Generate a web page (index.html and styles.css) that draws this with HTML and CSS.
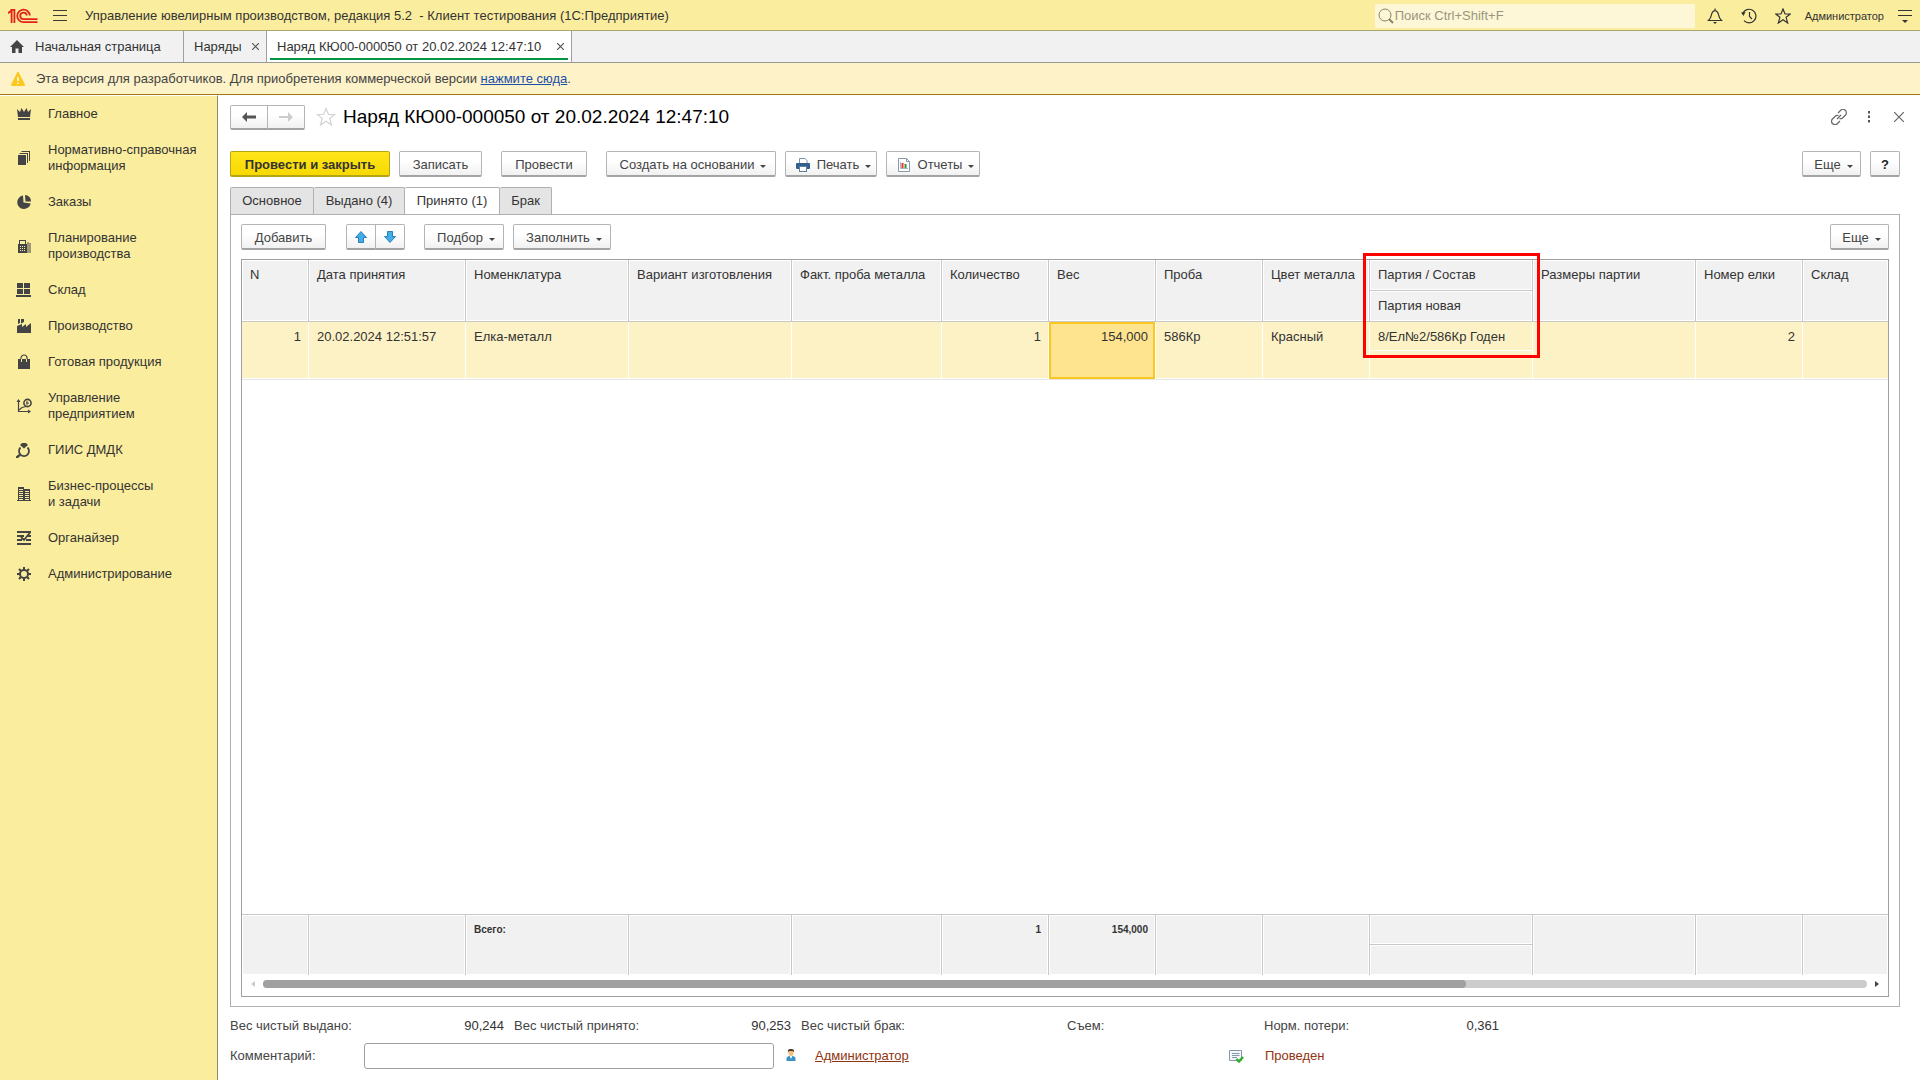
FILE: index.html
```html
<!DOCTYPE html>
<html lang="ru">
<head>
<meta charset="utf-8">
<title>Наряд КЮ00-000050 от 20.02.2024 12:47:10</title>
<link rel="stylesheet" href="styles.css">
</head>
<body>
<header class="topbar">
  <svg class="logo" width="30" height="16" viewBox="0 0 30 16" fill="none" stroke="#e2231a" stroke-width="1.800">
    <path d="M0 5.200 3.500 2.500M3.600 1.500V15M6.400 1V15M2.500 1.900H7.300"/>
    <path d="M21.800 7.500A6.300 6.300 0 1 0 15.500 14.200H29.500"/>
    <path d="M18.800 7.500A3.300 3.300 0 1 0 15.500 11.200H29.500"/>
  </svg>
  <button class="icon-btn burger" aria-label="Главное меню">
    <svg width="14" height="12" viewBox="0 0 14 12" stroke="#3a3a3a"><path d="M0 .5H14M0 5.500H14M0 10.500H14"/></svg>
  </button>
  <div class="app-title">Управление ювелирным производством, редакция 5.2 &nbsp;- Клиент тестирования (1С:Предприятие)</div>
  <label class="search">
    <svg width="16" height="16" viewBox="0 0 16 16" fill="none" stroke="#8a8468"><circle cx="7" cy="7" r="6"/><path d="M11 11 15 15" stroke-width="2"/></svg>
    <input type="text" placeholder="Поиск Ctrl+Shift+F" aria-label="Поиск">
  </label>
  <nav class="top-tools">
    <button class="icon-btn" aria-label="Оповещения"><svg width="16" height="16" viewBox="0 0 16 16" fill="none" stroke="#333" stroke-width="1.200"><path d="M1.500 12.500H14.500C12 10 12 9 11.500 6.500 11 4 10 3 8 2.500 6 3 5 4 4.500 6.500 4 9 4 10 1.500 12.500ZM8 .5V2.500"/><path d="M6 14H10L8 16Z" fill="#333" stroke="none"/></svg></button>
    <button class="icon-btn" aria-label="История"><svg width="16" height="16" viewBox="0 0 16 16" fill="none" stroke="#333" stroke-width="1.200"><path d="M1.800 5.500A6.800 6.800 0 1 1 3 12.600M8.500 4V8.500L11 11"/><path d="M0 4.500 4.500 4 2.500 8Z" fill="#333" stroke="none"/></svg></button>
    <button class="icon-btn" aria-label="Избранное"><svg width="16" height="16" viewBox="0 0 16 16" fill="none" stroke="#333" stroke-width="1.200"><path d="M8 1 10 6H15.300L11.100 9.300 12.700 15 8 11.700 3.300 15 4.900 9.300.700 6H6Z"/></svg></button>
    <a class="user" href="#">Администратор</a>
    <button class="icon-btn" aria-label="Сервис"><svg width="14" height="14" viewBox="0 0 14 14" stroke="#333"><path d="M0 1.500H14M0 6.500H14"/><path d="M4 11H10L7 14Z" fill="#333" stroke="none"/></svg></button>
  </nav>
</header>

<nav class="window-tabs">
  <a class="wtab home" href="#"><svg width="14" height="13" viewBox="0 0 14 13" fill="#444"><path d="M7 0 14 7H12V13H8.500V8.500H5.500V13H2V7H0Z"/></svg>Начальная страница</a>
  <a class="wtab list" href="#">Наряды<svg width="7" height="7" viewBox="0 0 7 7" stroke="#555" stroke-width="1.200"><path d="M0 0 7 7M7 0 0 7"/></svg></a>
  <a class="wtab current" href="#">Наряд КЮ00-000050 от 20.02.2024 12:47:10<svg width="7" height="7" viewBox="0 0 7 7" stroke="#555" stroke-width="1.200"><path d="M0 0 7 7M7 0 0 7"/></svg></a>
</nav>

<div class="banner">
  <svg width="14" height="14" viewBox="0 0 14 14"><path d="M7 1 13 13H1Z" fill="#fcc720" stroke="#fcc720" stroke-width="2" stroke-linejoin="round"/><path d="M7 5V9M7 10.500V12" stroke="#fff" stroke-width="1.400"/></svg>
  <p>Эта версия для разработчиков. Для приобретения коммерческой версии <a href="#">нажмите сюда</a>.</p>
</div>

<div class="workspace">
  <nav class="sections">
    <a href="#"><svg viewBox="0 0 16 16"><path d="M1 3 4 6 5.500 2 8 6 10.500 2 12 6 15 3 14 11H2ZM2 12H14V14H2Z"/></svg><span>Главное</span></a>
    <a href="#"><svg viewBox="0 0 16 16"><path d="M2 5H10V15H2ZM3.500 3H12V13H11V4H3.500ZM5.500 1H14V11H13V2H5.500Z"/></svg><span>Нормативно-справочная<br>информация</span></a>
    <a href="#"><svg viewBox="0 0 16 16"><path d="M7 1.500A6.800 6.800 0 1 0 14.700 9.500L7.500 8.500ZM9 1A6 6 0 0 1 15 7.500H9.500Z"/></svg><span>Заказы</span></a>
    <a href="#"><svg viewBox="0 0 16 16"><path fill-rule="evenodd" d="M2 6H3V2H10V6H11V15H2ZM4 3V6H9V3ZM4 8V9H5V8ZM6 8V9H7V8ZM8 8V9H9V8ZM4 10V11H5V10ZM6 10V11H7V10ZM8 10V11H9V10ZM4 12V13H5V12ZM6 12V13H7V12ZM8 12V13H9V12ZM11.500 4H12.500V15H11.500ZM13.500 5H14.500V15H13.500Z"/></svg><span>Планирование<br>производства</span></a>
    <a href="#"><svg viewBox="0 0 16 16"><path d="M1 1H7V6H1ZM8 1H14V6H8ZM1 7H7V12H1ZM8 7H14V12H8ZM0 13H15V15H0Z"/></svg><span>Склад</span></a>
    <a href="#"><svg viewBox="0 0 16 16"><path d="M1 8 6 6V9L10 6V9L15 5V15H1ZM2 1H4V5L2 6ZM5 1H8V4L5 5.500Z"/></svg><span>Производство</span></a>
    <a href="#"><svg viewBox="0 0 16 16"><path d="M2 5H14V15H2Z"/><path d="M5.500 5V8M10.500 5V8" stroke="#fbed9e"/><path d="M5 5V4A3 3 0 0 1 11 4V5" fill="none" stroke="#444" stroke-width="1.200"/></svg><span>Готовая продукция</span></a>
    <a href="#"><svg viewBox="0 0 16 16"><path d="M2.500 2V13.500H14M3 12 6 9.500 10 8.500" fill="none" stroke="#444" stroke-width="1.200"/><path d="M.5 4 2.500 1 4.500 4ZM12 11.500 15 13.500 12 15.500Z"/><circle cx="11.500" cy="5" r="3.600" fill="none" stroke="#444" stroke-width="1.600"/><path d="M11 3V7M10 5H13" stroke="#444"/></svg><span>Управление<br>предприятием</span></a>
    <a href="#"><svg viewBox="0 0 16 16"><path d="M4.500 5.500A5 5 0 1 0 11.500 5.500" fill="none" stroke="#444" stroke-width="1.800"/><path d="M6 1H10L12 3 8 6.500 4 3ZM3 12 5 13.500 2 16H0V14.500Z"/></svg><span>ГИИС ДМДК</span></a>
    <a href="#"><svg viewBox="0 0 16 16"><path fill-rule="evenodd" d="M2 1H8V3H14V14H15V15H1V14H2ZM3 3V4H7V3ZM3 5V6H7V5ZM3 7V8H7V7ZM3 9V10H7V9ZM3 11V12H7V11ZM3 13V14H7V13ZM9 5V6H13V5ZM9 7V8H13V7ZM9 9V10H13V9ZM9 11V12H13V11ZM9 13V14H13V13Z"/></svg><span>Бизнес-процессы<br>и задачи</span></a>
    <a href="#"><svg viewBox="0 0 16 16"><path d="M1 2H15M1 6H8M11 6H15M1 10H6M10 10H15M1 14H15M5 7 8 10 14 2.500" fill="none" stroke="#444" stroke-width="1.800"/></svg><span>Органайзер</span></a>
    <a href="#"><svg viewBox="0 0 16 16"><circle cx="8" cy="8" r="4" fill="none" stroke="#444" stroke-width="2"/><path d="M8 1V4M8 12V15M1 8H4M12 8H15M3 3 5 5M11 11 13 13M13 3 11 5M5 11 3 13" stroke="#444" stroke-width="2"/></svg><span>Администрирование</span></a>
  </nav>

  <main class="form">
    <div class="form-head">
      <div class="pair nav-pair">
        <button class="btn" aria-label="Назад"><svg width="14" height="10" viewBox="0 0 14 10"><path d="M0 5 5 0V3.500H14V6.500H5V10Z" fill="#555"/></svg></button>
        <button class="btn" aria-label="Вперед"><svg width="14" height="10" viewBox="0 0 14 10"><path d="M14 5 9 0V4H0V6H9V10Z" fill="#ccc"/></svg></button>
      </div>
      <svg class="fav" width="20" height="20" viewBox="0 0 20 20" fill="none" stroke="#d4d4d4" stroke-width="1.200"><path d="M10 1.500 12.500 7.500H18.500L13.700 11.500 15.500 18 10 14.200 4.500 18 6.300 11.500 1.500 7.500H7.500Z"/></svg>
      <h1>Наряд КЮ00-000050 от 20.02.2024 12:47:10</h1>
      <div class="form-tools">
        <button class="icon-btn" aria-label="Ссылка"><svg width="16" height="16" viewBox="0 0 16 16" fill="none" stroke="#666" stroke-width="1.200"><path d="M7 4 9.500 1.500A3 3 0 0 1 14.500 6L11.500 9A3 3 0 0 1 8.500 9.500M9 12 6.500 14.500A3 3 0 0 1 1.500 10L4.500 7A3 3 0 0 1 7.500 6.500M6 10 10 6"/></svg></button>
        <button class="icon-btn" aria-label="Меню"><svg width="4" height="12" viewBox="0 0 4 12" fill="#555"><path d="M1 0H3V2.500H1ZM1 4.500H3V7H1ZM1 9H3V11.500H1Z"/></svg></button>
        <button class="icon-btn" aria-label="Закрыть"><svg width="10" height="10" viewBox="0 0 10 10" stroke="#666" stroke-width="1.200"><path d="M0 0 10 10M10 0 0 10"/></svg></button>
      </div>
    </div>

    <div class="commands">
      <button class="btn primary">Провести и закрыть</button>
      <button class="btn w-save">Записать</button>
      <button class="btn gap w-post">Провести</button>
      <button class="btn gap drop w-create">Создать на основании</button>
      <button class="btn drop w-print"><svg width="16" height="16" viewBox="0 0 16 16"><path d="M4.500 6V1.500H10L12 3.500V6" fill="#fff" stroke="#7d93ab"/><rect x="1" y="6" width="14" height="6" rx="1" fill="#345f8c"/><rect x="4.500" y="9.500" width="7" height="5" fill="#fff" stroke="#5f7c9b"/></svg>Печать</button>
      <button class="btn drop w-report"><svg width="16" height="16" viewBox="0 0 16 16"><path d="M2.500 1.500H10.500L13.500 4.500V14.500H2.500Z" fill="#fff" stroke="#8a99ab"/><path d="M10.500 1.500V4.500H13.500" fill="none" stroke="#8a99ab"/><path d="M5.500 6H7.500V11H5.500Z" fill="#e33"/><path d="M8.500 7H10.500V11H8.500Z" fill="#393"/><path d="M4.500 5V11.500H12" fill="none" stroke="#a9b4c1"/></svg>Отчеты</button>
      <button class="btn drop push">Еще</button>
      <button class="btn help">?</button>
    </div>

    <nav class="pages">
      <button class="w-p1">Основное</button><button class="w-p2">Выдано (4)</button><button class="w-p3 current">Принято (1)</button><button class="w-p4">Брак</button>
    </nav>

    <section class="page">
      <div class="commands table-commands">
        <button class="btn w-add">Добавить</button>
        <div class="pair">
          <button class="btn" aria-label="Вверх"><svg width="12" height="12" viewBox="0 0 12 12"><path d="M6 .5 11.500 6.500H8.500V11.500H3.500V6.500H.5Z" fill="#41aeea" stroke="#2b7fb5"/></svg></button>
          <button class="btn" aria-label="Вниз"><svg width="12" height="12" viewBox="0 0 12 12"><path d="M6 11.500 .5 5.500H3.500V.5H8.500V5.500H11.500Z" fill="#41aeea" stroke="#2b7fb5"/></svg></button>
        </div>
        <button class="btn gap drop w-pick">Подбор</button>
        <button class="btn drop w-fill">Заполнить</button>
        <button class="btn drop push">Еще</button>
      </div>

      <div class="grid">
        <table>
          <colgroup><col class="c-n"><col class="c-date"><col class="c-item"><col class="c-item"><col class="c-fact"><col class="c-num"><col class="c-num"><col class="c-num"><col class="c-num"><col class="c-item"><col class="c-item"><col class="c-num"><col></colgroup>
          <thead>
            <tr>
              <th rowspan="2">N</th><th rowspan="2">Дата принятия</th><th rowspan="2">Номенклатура</th><th rowspan="2">Вариант изготовления</th><th rowspan="2">Факт. проба металла</th><th rowspan="2">Количество</th><th rowspan="2">Вес</th><th rowspan="2">Проба</th><th rowspan="2">Цвет металла</th><th class="marked">Партия / Состав<span class="marker"></span></th><th rowspan="2">Размеры партии</th><th rowspan="2">Номер елки</th><th rowspan="2">Склад</th>
            </tr>
            <tr><th>Партия новая</th></tr>
          </thead>
          <tbody>
            <tr>
              <td class="num" rowspan="2">1</td><td rowspan="2">20.02.2024 12:51:57</td><td rowspan="2">Елка-металл</td><td rowspan="2"></td><td rowspan="2"></td><td class="num" rowspan="2">1</td><td class="num active" rowspan="2">154,000</td><td rowspan="2">586Кр</td><td rowspan="2">Красный</td><td>8/Ел№2/586Кр Годен</td><td rowspan="2"></td><td class="num" rowspan="2">2</td><td rowspan="2"></td>
            </tr>
            <tr><td></td></tr>
          </tbody>
        </table>
        <table class="totals">
          <colgroup><col class="c-n"><col class="c-date"><col class="c-item"><col class="c-item"><col class="c-fact"><col class="c-num"><col class="c-num"><col class="c-num"><col class="c-num"><col class="c-item"><col class="c-item"><col class="c-num"><col></colgroup>
          <tbody>
            <tr>
              <th rowspan="2"></th><th rowspan="2"></th><th rowspan="2">Всего:</th><th rowspan="2"></th><th rowspan="2"></th><th class="num" rowspan="2">1</th><th class="num" rowspan="2">154,000</th><th rowspan="2"></th><th rowspan="2"></th><th></th><th rowspan="2"></th><th rowspan="2"></th><th rowspan="2"></th>
            </tr>
            <tr><th></th></tr>
          </tbody>
        </table>
        <div class="scroll">
          <svg width="4" height="6" viewBox="0 0 4 6" fill="#ccc"><path d="M4 0V6L0 3Z"/></svg>
          <div class="track"><div class="thumb"></div></div>
          <svg width="4" height="6" viewBox="0 0 4 6" fill="#444"><path d="M0 0V6L4 3Z"/></svg>
        </div>
      </div>
    </section>

    <dl class="summary">
      <dt>Вес чистый выдано:</dt><dd>90,244</dd>
      <dt>Вес чистый принято:</dt><dd>90,253</dd>
      <dt>Вес чистый брак:</dt><dd></dd>
      <dt>Съем:</dt><dd></dd>
      <dt>Норм. потери:</dt><dd>0,361</dd>
    </dl>

    <div class="bottom">
      <label for="comment">Комментарий:</label>
      <input id="comment" type="text">
      <svg class="person" width="12" height="16" viewBox="0 0 12 16"><path d="M1.500 13V10.500C1.500 9 2.500 8.500 4 8H8C9.500 8.500 10.500 9 10.500 10.500V13Z" fill="#3a92c6"/><path d="M4.500 7.500H7.500L6 11Z" fill="#fff"/><ellipse cx="6" cy="4.800" rx="2.500" ry="3.300" fill="#f3bd7a"/><path d="M3 4.500C2.500 1.500 4 1 6 1S9.500 1.500 9 4.500L8 3H4Z" fill="#4b3a2c"/></svg>
      <a class="author" href="#">Администратор</a>
      <svg class="state" width="16" height="16" viewBox="0 0 16 16"><path d="M1.500 2.500H13.500V12.500H1.500Z" fill="#f4f7fa" stroke="#8897ad"/><path d="M4 5.500H11.500M4 7.500H11.500M4 9.500H9" stroke="#8897ad"/><path d="M8.500 11 11 13.500 15 9" fill="none" stroke="#2ab02a" stroke-width="2.400"/></svg>
      <span class="posted">Проведен</span>
    </div>
  </main>
</div>
</body>
</html>
```
FILE: styles.css
```css
* { box-sizing: border-box; }

body {
  margin: 0;
  min-height: 100vh;
  display: flex;
  flex-direction: column;
  background: #fff;
  color: #333;
  font: 13px/16px "Liberation Sans", Arial, sans-serif;
}

a { color: inherit; text-decoration: none; }
svg { flex: none; display: block; }
button, input { font: inherit; color: inherit; }
.icon-btn { display: flex; align-items: center; justify-content: center; padding: 0; border: 0; background: none; }

/* Title bar */
.topbar {
  display: flex;
  align-items: center;
  height: 31px;
  padding: 1px 8px 0;
  background: #fbed9e;
  border-bottom: 1px solid #aba56f;
}
.burger { margin: 0 18px 0 15px; }
.app-title { flex: 1; white-space: nowrap; }
.search {
  display: flex;
  align-items: center;
  gap: 1px;
  width: 320px;
  height: 24px;
  padding: 0 3px;
  border-radius: 2px;
  background: #fdf7d8;
}
.search input { flex: 1; min-width: 0; padding: 0; border: 0; outline: 0; background: none; }
.search input::placeholder { color: #9a957c; opacity: 1; }
.top-tools { display: flex; align-items: center; gap: 18px; margin-left: 12px; }
.user { font-size: 11px; margin: 0 -4px; }

/* Open windows */
.window-tabs {
  display: flex;
  height: 32px;
  background: #f1f1f1;
  border-bottom: 1px solid #999;
}
.wtab {
  display: flex;
  align-items: center;
  justify-content: space-between;
  gap: 8px;
  padding: 0 7px 0 10px;
  border-right: 1px solid #a0a0a0;
  white-space: nowrap;
}
.wtab.home { justify-content: flex-start; gap: 11px; min-width: 184px; }
.wtab.list { min-width: 83px; }
.wtab.current {
  min-width: 305px;
  background: linear-gradient(#009646, #009646) center 27px / calc(100% - 6px) 2px no-repeat #fff;
}

/* Licence notice */
.banner {
  display: flex;
  align-items: center;
  gap: 11px;
  height: 32px;
  padding: 0 11px;
  background: #fdf2c8;
  border-bottom: 1px solid #9c7c12;
  color: #444;
}
.banner p { margin: 0; }
.banner a { color: #1a4fa8; text-decoration: underline; }

.workspace { flex: 1; display: flex; }

/* Sections panel */
.sections {
  width: 218px;
  flex: none;
  background: #fbed9e;
  border-top: 1px solid #fff;
  border-right: 1px solid #8f8a68;
}
.sections a { display: flex; align-items: center; gap: 16px; padding: 10px 8px 10px 16px; }
.sections svg { width: 16px; height: 16px; fill: #444; }

/* Document form */
.form { flex: 1; min-width: 0; display: flex; flex-direction: column; padding: 10px 20px 11px 12px; }
.form-head { display: flex; align-items: center; height: 24px; }
.form-head h1 { margin: 0; font-size: 19px; line-height: 24px; font-weight: normal; color: #000; }
.fav { margin: 0 7px 0 11px; }
.form-tools { display: flex; align-items: center; gap: 14px; margin: 0 -7px 0 auto; }
.form-tools .icon-btn { width: 16px; height: 16px; }

.btn {
  display: flex;
  align-items: center;
  justify-content: center;
  height: 26px;
  padding: 2px 10px 0;
  border: 1px solid #b4b4b4;
  border-bottom: 2px solid #a3a3a3;
  border-radius: 2px;
  background: linear-gradient(#fff 40%, #f1f1f1);
  color: #444;
  white-space: nowrap;
}
.btn svg { margin-right: 6px; }
.pair { display: flex; }
.pair .btn { width: 30px; padding: 1px 0 0; }
.pair .btn svg { margin: 0; }
.pair .btn + .btn { margin-left: -1px; border-radius: 0 2px 2px 0; }
.pair .btn:first-child { border-radius: 2px 0 0 2px; }
.nav-pair .btn { width: 38px; height: 25px; }
.drop::after {
  content: "";
  margin: 4px 0 0 6px;
  border: 3px solid transparent;
  border-top-color: #444;
  border-bottom: 0;
}
.btn.primary {
  width: 160px;
  border-color: #b8a312;
  background: linear-gradient(#ffe61c, #f7d900);
  font-weight: bold;
  color: #333;
}
.btn.drop { padding: 2px 6px 0 10px; }
.commands { display: flex; gap: 9px; margin-top: 22px; }
.commands .gap { margin-left: 10px; }
.commands .push { width: 59px; margin-left: auto; }
.btn.help { width: 30px; padding: 2px 0 0; font-weight: bold; color: #222; }
.w-save { width: 83px; }
.w-post { width: 86px; }
.w-create { width: 170px; }
.w-print { width: 92px; }
.w-report { width: 94px; }
.w-add { width: 85px; }
.w-pick { width: 80px; }
.w-fill { width: 98px; }

.pages { display: flex; margin-top: 10px; }
.pages button {
  height: 27px;
  padding: 0;
  border: 1px solid #b0b0b0;
  border-left-width: 0;
  border-bottom: 0;
  border-radius: 2px 2px 0 0;
  background: #e4e4e4;
}
.pages button:first-child { border-left-width: 1px; }
.pages .current { height: 28px; margin-bottom: -1px; padding-bottom: 1px; background: #fff; }
.w-p1 { width: 84px; }
.w-p2 { width: 91px; }
.w-p3 { width: 95px; }
.w-p4 { width: 52px; }

.page { flex: 1; display: flex; flex-direction: column; padding: 9px 10px; border: 1px solid #b0b0b0; }
.table-commands { margin: 0 0 9px; }
.table-commands .pair { margin-left: 11px; }

/* Tabular section */
.grid { flex: 1; display: flex; flex-direction: column; border: 1px solid #a0a0a0; }
.grid table { width: 100%; table-layout: fixed; border-collapse: separate; border-spacing: 0; }
.c-n { width: 67px; }
.c-date { width: 157px; }
.c-item { width: 163px; }
.c-fact { width: 150px; }
.c-num { width: 107px; }
.grid th, .grid td {
  height: 31px;
  padding: 7px 7px 5px 8px;
  vertical-align: top;
  text-align: left;
  font-weight: normal;
  white-space: nowrap;
}
.grid th {
  background: #f1f1f1;
  border: 0 solid #c8c8c8;
  border-width: 0 1px 1px 0;
  box-shadow: inset 0 0 0 1px #fff;
}
.grid td {
  height: 29px;
  background: #fdf2c6;
  border: 0 solid #fff;
  border-width: 0 1px 1px 0;
}
.grid td[rowspan], .grid tr:last-child td { border-bottom-color: #e4e4e4; box-shadow: inset 0 -1px #fff; }
.grid tr > :last-child[rowspan] { border-right-width: 0; }
.grid .num { text-align: right; }
.grid td.active { background: #ffe48f; box-shadow: inset 0 0 0 2px #fbc81f; }
.marked { position: relative; }
.marker {
  position: absolute;
  left: -7px;
  top: -7px;
  width: 177px;
  height: 105px;
  border: 3px solid #f00;
  pointer-events: none;
}
.totals { margin-top: auto; border-top: 1px solid #c8c8c8; }
.grid .totals th { font-size: 10px; font-weight: bold; border-bottom-width: 0; }
.grid .totals th:not([rowspan]) { height: 30px; }
.grid .totals tr:first-child th:not([rowspan]) { border-bottom-width: 1px; }

.scroll { display: flex; align-items: center; gap: 8px; height: 21px; padding: 1px 9px 5px; }
.track { flex: 1; height: 8px; border-radius: 4px; background: #ccc; }
.thumb { width: 75%; height: 8px; border-radius: 4px; background: #a0a0a0; }

/* Form footer */
.summary {
  display: grid;
  grid-template-columns: 130px 144px 150px 137px 120px 146px 60px 137px 130px 115px;
  margin: 11px 0 9px;
  white-space: nowrap;
}
.summary dt { color: #444; }
.summary dt:nth-of-type(n + 2) { padding-left: 10px; }
.summary dd { margin: 0; text-align: right; }
.bottom { display: flex; align-items: center; color: #444; }
.bottom label { width: 134px; }
.bottom input { width: 410px; height: 26px; padding: 0 6px; border: 1px solid #a0a0a0; border-radius: 3px; background: #fff; }
.person { margin: 0 18px 0 11px; }
.author, .posted { color: #8f3410; }
.author { width: 413px; text-decoration: underline; }
.state { margin-right: 21px; }
```
